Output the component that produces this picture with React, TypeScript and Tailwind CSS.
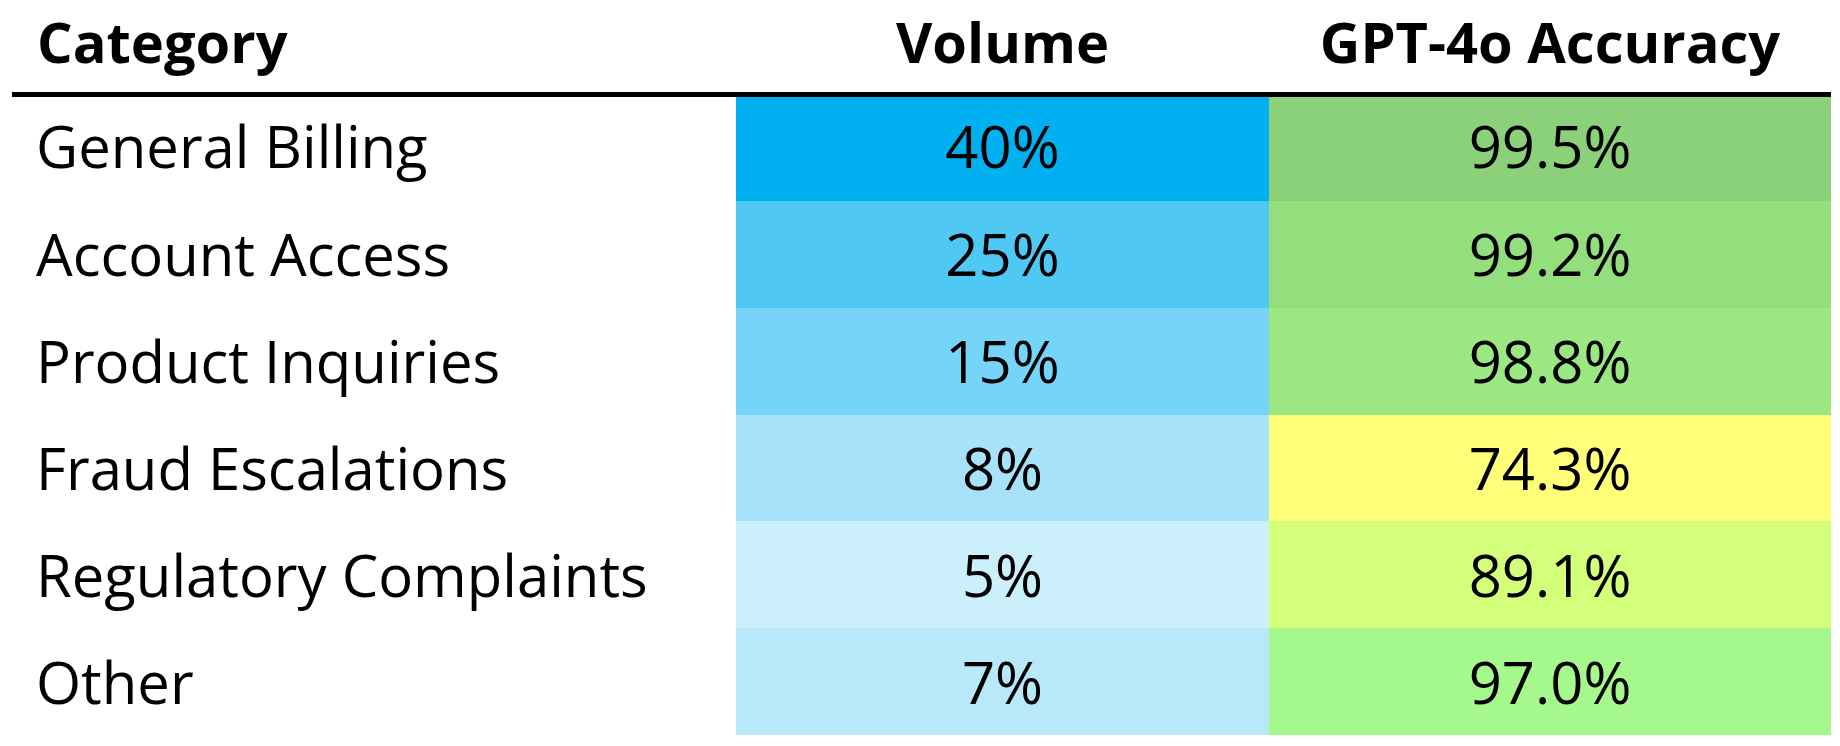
const rows = [
  { category: 'General Billing', volume: '40%', volumeBg: 'bg-[#00b0f0]', accuracy: '99.5%', accuracyBg: 'bg-[#8bd17a]' },
  { category: 'Account Access', volume: '25%', volumeBg: 'bg-[#4fc8f4]', accuracy: '99.2%', accuracyBg: 'bg-[#93de7d]' },
  { category: 'Product Inquiries', volume: '15%', volumeBg: 'bg-[#75d4f7]', accuracy: '98.8%', accuracyBg: 'bg-[#9be882]' },
  { category: 'Fraud Escalations', volume: '8%', volumeBg: 'bg-[#a8e2fa]', accuracy: '74.3%', accuracyBg: 'bg-[#ffff7a]' },
  { category: 'Regulatory Complaints', volume: '5%', volumeBg: 'bg-[#ccf0fb]', accuracy: '89.1%', accuracyBg: 'bg-[#d3ff7a]' },
  { category: 'Other', volume: '7%', volumeBg: 'bg-[#b8e8fa]', accuracy: '97.0%', accuracyBg: 'bg-[#a5f88b]' },
];

export default function App() {
  return (
    <div className="w-[1840px] h-[746px] bg-white text-black font-['Open_Sans',sans-serif] overflow-hidden">
      <div className="ml-3 w-[1819px]">
        {/* header */}
        <div className="grid grid-cols-[724px_533px_562px] h-[92px] font-bold text-[56px] leading-none">
          <div className="pl-[25px] pb-[10px] flex items-center">Category</div>
          <div className="pb-[10px] flex items-center justify-center">Volume</div>
          <div className="pb-[10px] flex items-center justify-center">GPT-4o Accuracy</div>
        </div>
        <div className="h-[5px] bg-black" />

        {rows.map((row, i) => {
          const rowClass = i === 0 ? 'h-[104px]' : 'h-[106.8px]';
          const pad = i === 0 ? 'pb-[6px]' : 'pb-0';
          return (
            <div
              key={row.category}
              className={`grid grid-cols-[724px_533px_562px] ${rowClass} text-[58px] leading-none`}
            >
              <div className={`pl-[24px] ${pad} flex items-center whitespace-nowrap`}>{row.category}</div>
              <div className={`${row.volumeBg} ${pad} flex items-center justify-center`}>{row.volume}</div>
              <div className={`${row.accuracyBg} ${pad} flex items-center justify-center`}>{row.accuracy}</div>
            </div>
          );
        })}
      </div>
    </div>
  );
}
